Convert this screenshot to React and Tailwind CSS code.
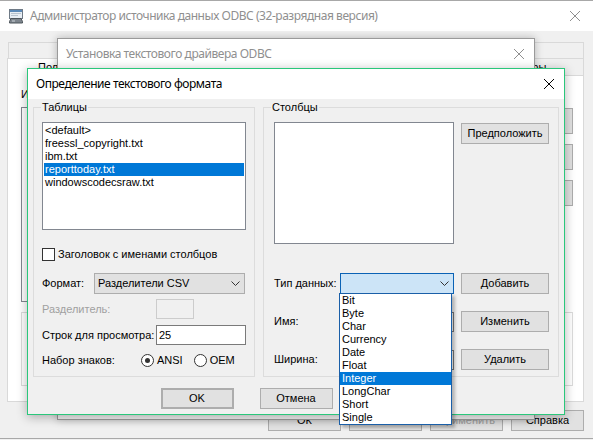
import React from "react";

const sans = "font-['Liberation_Sans',Arial,sans-serif]";
const ui = "font-['Noto_Sans','Open_Sans',sans-serif] text-[12px] tracking-[-0.45px]";

function Chevron() {
  return (
    <svg width="9" height="5" viewBox="0 0 9 5">
      <path d="M0.5 0.5 L4.5 4.5 L8.5 0.5" fill="none" stroke="#333" strokeWidth="1" />
    </svg>
  );
}

function CloseX({ color }) {
  return (
    <svg width="10" height="10" viewBox="0 0 10 10">
      <path d="M0 0 L10 10 M10 0 L0 10" stroke={color} strokeWidth="1" />
    </svg>
  );
}

function Button({ children, className = "", disabled }) {
  return (
    <div
      className={`flex items-center justify-center bg-[#e1e1e1] border border-[#adadad] ${
        disabled ? "text-[#a0a0a0]" : "text-black"
      } ${className}`}
    >
      {children}
    </div>
  );
}

function Group({ label, className = "", children }) {
  return (
    <div className={`relative border border-[#dcdcdc] ${className}`}>
      <span className="absolute -top-[7px] left-[7px] bg-[#f0f0f0] px-[1px] leading-[13px]">
        {label}
      </span>
      {children}
    </div>
  );
}

function Radio({ checked, label }) {
  return (
    <div className="flex items-center">
      <div className="w-[13px] h-[13px] rounded-full border border-[#333] bg-white flex items-center justify-center">
        {checked && <div className="w-[5px] h-[5px] rounded-full bg-[#333]" />}
      </div>
      <span className="ml-[3px]">{label}</span>
    </div>
  );
}

function OdbcIcon() {
  return (
    <svg width="16" height="16" viewBox="0 0 16 16">
      <rect x="1.5" y="1.5" width="13" height="9" fill="#e8eef4" stroke="#6f7a86" />
      <rect x="2" y="2" width="12" height="2" fill="#5a89b8" />
      <rect x="3" y="5" width="10" height="1" fill="#b9c4cf" />
      <rect x="3" y="7" width="7" height="1" fill="#b9c4cf" />
      <path d="M3 10.5 h10 l1.5 3 v1.5 h-13 v-1.5 z" fill="#7d858d" stroke="#4d545b" />
      <rect x="4" y="12.5" width="3" height="1" fill="#c9d1d8" />
    </svg>
  );
}

const tables = ["<default>", "freessl_copyright.txt", "ibm.txt", "reporttoday.txt", "windowscodecsraw.txt"];
const types = ["Bit", "Byte", "Char", "Currency", "Date", "Float", "Integer", "LongChar", "Short", "Single"];

export default function App() {
  return (
    <div className={`relative w-[593px] h-[440px] overflow-hidden bg-[#f0f0f0] ${sans} text-[11px] text-black`}>
      {/* ODBC administrator (back window) */}
      <div className="flex flex-col h-[439px] border-t border-b border-[#a8a8a8]">
        <div className="h-[30px] shrink-0 bg-white flex items-center pl-[8px] pr-[13px]">
          <OdbcIcon />
          <span className={`ml-[6px] ${ui} text-[#8f8f8f]`}>
            Администратор источника данных ODBC (32-разрядная версия)
          </span>
          <div className="ml-auto">
            <CloseX color="#8f8f8f" />
          </div>
        </div>

        <div className="ml-[7px] mt-[11px] w-[577px]">
          {/* back row of tabs, hidden behind the setup window */}
          <div className="flex h-[16px] ml-[1px]">
            <div className="w-[192px] border-t border-l border-[#d9d9d9]" />
            <div className="w-[192px] border-t border-l border-[#d9d9d9]" />
            <div className="flex-1 border-t border-l border-r border-[#d9d9d9]" />
          </div>
          <div className="flex h-[18px]">
            <div className="w-[174px] bg-white border-t border-l border-[#d9d9d9] flex items-center pl-[30px]">
              Пользовательский DSN
            </div>
            <div className="w-[139px] border-t border-l border-b border-[#d9d9d9]" />
            <div className="w-[137px] border-t border-l border-b border-[#d9d9d9]" />
            <div className="flex-1 border-t border-l border-r border-b border-[#d9d9d9] flex items-center justify-center">
              Драйверы
            </div>
          </div>
          <div className="h-[326px] bg-white border-l border-r border-b border-[#d9d9d9] pl-[13px] pr-[10px] pt-[12px] flex flex-col">
            <div className="flex">
              <div className="flex flex-col">
                <span className="leading-[13px]">Источники данных пользователя:</span>
                <div className="mt-[6px] w-[452px] h-[195px] bg-white border border-[#828790]" />
              </div>
              <div className="ml-auto mt-[20px] flex flex-col gap-[10px] w-[82px]">
                <Button className="h-[26px]" />
                <Button className="h-[26px]" />
                <Button className="h-[26px]" />
              </div>
            </div>
            <div className="mt-[10px] h-[74px] border border-[#dcdcdc]" />
          </div>
          <div className="flex justify-end gap-[8px] mt-[8px]">
            <Button className="w-[73px] h-[21px]">ОК</Button>
            <Button className="w-[73px] h-[21px]">Отмена</Button>
            <Button className="w-[73px] h-[21px]" disabled>
              Применить
            </Button>
            <Button className="w-[73px] h-[21px]">Справка</Button>
          </div>
        </div>
      </div>

      {/* Text driver setup (middle window) */}
      <div className="absolute left-[57px] top-[38px] w-[478px] h-[382px] border border-[#9a9a9a] bg-[#f0f0f0] shadow-[0_0_8px_rgba(0,0,0,0.25)] flex flex-col">
        <div className="h-[30px] bg-white flex items-center pl-[8px] pr-[10px]">
          <span className={`${ui} text-[#8f8f8f]`}>Установка текстового драйвера ODBC</span>
          <div className="ml-auto">
            <CloseX color="#8f8f8f" />
          </div>
        </div>
        <div className="flex-1 mx-[5px] mb-[6px] border-b border-l border-r border-[#dcdcdc]" />
      </div>

      {/* Define text format (active dialog) */}
      <div className="absolute left-[27px] top-[68px] w-[538px] h-[347px] border border-[#2ac77b] bg-[#f0f0f0] shadow-[0_2px_10px_rgba(0,0,0,0.3)] flex flex-col">
        <div className="h-[30px] shrink-0 bg-white flex items-center pl-[8px] pr-[10px]">
          <span className={`${ui} text-black`}>Определение текстового формата</span>
          <div className="ml-auto">
            <CloseX color="#000" />
          </div>
        </div>

        <div className="flex px-[5px] mt-[8px]">
          <Group label="Таблицы" className="w-[222px] h-[270px] px-[8px] pt-[14px]">
            <div className="w-[204px] h-[108px] bg-white border border-[#828790] p-[1px] leading-[13px]">
              {tables.map((t) => (
                <div key={t} className={`pl-[1px] ${t === "reporttoday.txt" ? "bg-[#0078d7] text-white" : ""}`}>
                  {t}
                </div>
              ))}
            </div>
            <div className="flex items-center mt-[18px] h-[13px]">
              <div className="w-[13px] h-[13px] bg-white border border-[#333]" />
              <span className="ml-[3px]">Заголовок с именами столбцов</span>
            </div>
            <div className="flex items-center mt-[12px]">
              <span className="w-[52px]">Формат:</span>
              <div className="w-[151px] h-[21px] bg-[#e1e1e1] border border-[#adadad] flex items-center pl-[3px] pr-[4px]">
                <span>Разделители CSV</span>
                <div className="ml-auto">
                  <Chevron />
                </div>
              </div>
            </div>
            <div className="flex items-center mt-[5px]">
              <span className="w-[114px] text-[#a0a0a0]">Разделитель:</span>
              <div className="w-[38px] h-[20px] border border-[#cccccc] bg-[#f0f0f0]" />
            </div>
            <div className="flex items-center mt-[6px]">
              <span className="w-[114px]">Строк для просмотра:</span>
              <div className="w-[90px] h-[20px] bg-white border border-[#7a7a7a] flex items-center pl-[2px]">25</div>
            </div>
            <div className="flex items-center mt-[9px] h-[13px]">
              <span className="w-[99px]">Набор знаков:</span>
              <Radio checked label="ANSI" />
              <div className="ml-[11px]">
                <Radio label="OEM" />
              </div>
            </div>
          </Group>

          <Group label="Столбцы" className="ml-[8px] w-[296px] h-[270px] pl-[10px] pt-[14px]">
            <div className="flex">
              <div className="w-[180px] h-[122px] bg-white border border-[#828790]" />
              <Button className="ml-[7px] mt-[1px] w-[88px] h-[21px]">Предположить</Button>
            </div>
            <div className="flex items-center mt-[29px]">
              <span className="w-[66px]">Тип данных:</span>
              <div className="w-[114px] h-[21px] bg-[#cce4f7] border border-[#0a62b5] flex items-center justify-end pr-[4px]">
                <Chevron />
              </div>
              <Button className="ml-[7px] w-[88px] h-[21px]">Добавить</Button>
            </div>
            <div className="flex items-center mt-[17px]">
              <span className="w-[66px]">Имя:</span>
              <div className="w-[114px] h-[20px] bg-white border border-[#7a7a7a]" />
              <Button className="ml-[7px] w-[88px] h-[21px]">Изменить</Button>
            </div>
            <div className="flex items-center mt-[17px]">
              <span className="w-[66px]">Ширина:</span>
              <div className="w-[114px] h-[20px] bg-white border border-[#7a7a7a]" />
              <Button className="ml-[7px] w-[88px] h-[21px]">Удалить</Button>
            </div>
          </Group>
        </div>

        <div className="flex justify-center gap-[26px] mt-[11px]">
          <Button className="w-[73px] h-[21px] border-2 border-[#0078d7]">OK</Button>
          <Button className="w-[73px] h-[21px]">Отмена</Button>
          <Button className="w-[73px] h-[21px]" />
        </div>

        {/* open data type list */}
        <div className="absolute left-[311px] top-[224px] w-[113px] h-[132px] bg-white border border-[#1a5fa8] shadow-[3px_3px_3px_rgba(0,0,0,0.25)] leading-[13px]">
          {types.map((t) => (
            <div key={t} className={`pl-[2px] ${t === "Integer" ? "bg-[#0078d7] text-white" : ""}`}>
              {t}
            </div>
          ))}
        </div>
      </div>
    </div>
  );
}
